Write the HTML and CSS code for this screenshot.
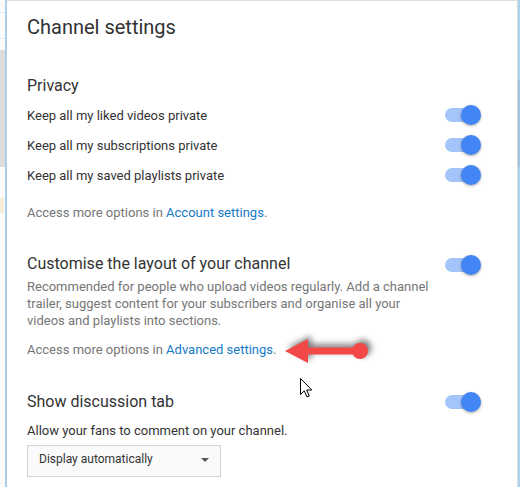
FILE: index.html
```html
<!DOCTYPE html>
<html>
<head>
<meta charset="utf-8">
<link rel="stylesheet" href="styles.css">
</head>
<body>
<div class="frame">
  <div class="side-left">
    <div class="sl-line sl-line1"></div>
    <div class="sl-line sl-line2"></div>
    <div class="sl-block"></div>
    <div class="sl-yellow"></div>
  </div>
  <div class="edge-blue"></div>
  <div class="dialog">
    <h1 class="title">Channel settings</h1>

    <h2 class="heading privacy-heading">Privacy</h2>
    <div class="row"><span>Keep all my liked videos private</span><span class="toggle"></span></div>
    <div class="row"><span>Keep all my subscriptions private</span><span class="toggle"></span></div>
    <div class="row"><span>Keep all my saved playlists private</span><span class="toggle"></span></div>
    <p class="more more-account">Access more options in <a class="link">Account settings</a>.</p>

    <div class="section section-layout">
      <div class="section-text">
        <h2 class="heading">Customise the layout of your channel</h2>
        <p class="desc">Recommended for people who upload videos regularly. Add a channel trailer, suggest content for your subscribers and organise all your videos and playlists into sections.</p>
      </div>
      <span class="toggle toggle-top"></span>
    </div>
    <p class="more more-advanced">Access more options in <a class="link">Advanced settings</a>.</p>

    <div class="section section-discussion">
      <h2 class="heading">Show discussion tab</h2>
      <span class="toggle toggle-top"></span>
    </div>
    <p class="more allow">Allow your fans to comment on your channel.</p>
    <div class="select"><span>Display automatically</span><span class="caret"></span></div>

    <svg class="red-arrow" width="100" height="40" viewBox="0 0 100 40">
      <path d="M2 15 L25 3 L25 11.5 L77 11.5 L77 18.5 L25 18.5 L25 27 Z" fill="#f34848"/>
      <circle cx="77" cy="15" r="8" fill="#f34848"/>
    </svg>
    <svg class="cursor" width="14" height="21" viewBox="0 0 14 21">
      <path d="M0.5 0.5 L0.5 16.5 L4.3 12.9 L7 19 L9.3 18 L6.7 12 L11.8 12 Z" fill="#fff" stroke="#000" stroke-width="1" stroke-linejoin="miter"/>
    </svg>
  </div>
  <div class="edge-right"></div>
</div>
</body>
</html>
```

FILE: styles.css
```css
* { box-sizing: border-box; }
html, body { margin: 0; padding: 0; background: #fff; }
body {
  font-family: Roboto, "Liberation Sans", Arial, sans-serif;
  color: #333;
  width: 520px;
  height: 487px;
  overflow: hidden;
}
.frame {
  display: flex;
  height: 487px;
}
.side-left {
  width: 5px;
  position: relative;
  background: #fbfbfb;
  flex: none;
}
.sl-line { position: absolute; left: 0; width: 5px; height: 1px; background: #e4ebf1; }
.sl-line1 { top: 12px; }
.sl-line2 { top: 38px; }
.sl-block { position: absolute; left: 0; top: 50px; width: 5px; height: 117px; background: #dcdcdc; }
.sl-yellow { position: absolute; left: 0; top: 198px; width: 4px; height: 15px; background: #f4ecd8; }
.edge-blue {
  width: 2px;
  background: #a9cfec;
  flex: none;
}
.dialog {
  flex: 1;
  position: relative;
  border-top: 1px solid #e0e0e0;
  border-right: 1px solid #d8d8d8;
  padding: 14px 36px 0 20px;
}
.edge-right {
  width: 2px;
  flex: none;
  background: linear-gradient(#acd3f0 0, #acd3f0 80px, #9ec3e0 80px, #9ec3e0 167px, #acd3f0 167px);
}
.title {
  margin: 0;
  font-size: 20px;
  line-height: 24px;
  font-weight: 400;
  color: #333;
}
.heading {
  margin: 0;
  font-size: 16px;
  line-height: 20px;
  font-weight: 400;
  color: #333;
}
.privacy-heading { margin-top: 37px; margin-bottom: 4px; }
.row {
  display: flex;
  justify-content: space-between;
  align-items: center;
  height: 30px;
  font-size: 13px;
  color: #333;
}
.toggle {
  position: relative;
  width: 36px;
  height: 20px;
  flex: none;
}
.toggle::before {
  content: "";
  position: absolute;
  left: 0;
  top: 3px;
  width: 32px;
  height: 14px;
  border-radius: 7px;
  background: #a4c5fa;
}
.toggle::after {
  content: "";
  position: absolute;
  right: 0;
  top: 0;
  width: 20px;
  height: 20px;
  border-radius: 50%;
  background: #4285f4;
  box-shadow: 0 1px 3px rgba(0,0,0,0.35);
}
.more {
  margin: 0;
  font-size: 13px;
  line-height: 20px;
  color: #767676;
}
.more-account { margin-top: 13px; margin-bottom: -2px; }
.link { color: #167ac6; text-decoration: none; }
.section {
  display: flex;
  justify-content: space-between;
  align-items: flex-start;
}
.section-layout { margin-top: 33px; }
.section-text { width: 412px; }
.toggle-top { margin-top: 1px; }
.desc {
  margin: 4px 0 0 0;
  font-size: 13px;
  line-height: 17px;
  color: #767676;
}
.more-advanced { margin-top: 11px; }
.section-discussion { margin-top: 32px; }
.section-discussion .toggle-top { margin-top: 0; }
.allow { margin-top: 9px; color: #333; }
.select {
  margin-top: 4px;
  width: 194px;
  height: 32px;
  border: 1px solid #d3d3d3;
  background: #fafafa;
  display: flex;
  align-items: center;
  justify-content: space-between;
  padding: 0 11px 4px 11px;
  font-size: 12px;
  color: #333;
}
.caret {
  width: 0;
  height: 0;
  margin-top: 2px;
  border-left: 4px solid transparent;
  border-right: 4px solid transparent;
  border-top: 4px solid #555;
}
.red-arrow {
  position: absolute;
  left: 276px;
  top: 335px;
  filter: drop-shadow(3px -3px 3px rgba(0,0,0,0.55));
}
.cursor {
  position: absolute;
  left: 293px;
  top: 377px;
}
```
